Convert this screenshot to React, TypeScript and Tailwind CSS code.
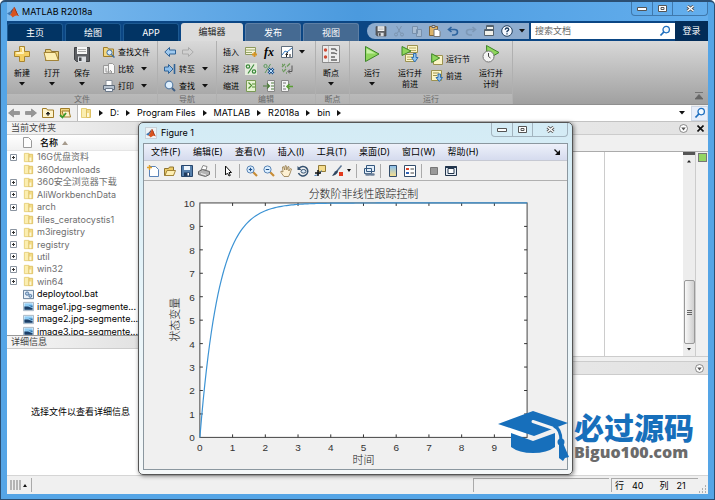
import React from "react";

type IconProps = { className?: string };

// Small coloured toolbar glyphs, drawn on a 12x12 grid unless noted
const Svg: React.FC<{
  children: React.ReactNode;
  size?: number;
  className?: string;
}> = ({ children, size = 12, className = "size-3" }) => (
  <svg
    viewBox={`0 0 ${size} ${size}`}
    className={`shrink-0 ${className}`}
    aria-hidden="true"
  >
    {children}
  </svg>
);

const MatlabLogo = ({ className }: IconProps) => (
  <Svg className={className}>
    <path d="M0 7.4 3.4 5.4 5 7.2 2.6 9.2z" fill="#3c78b4" />
    <path d="M3.4 5.4 7.2 1 5 7.2z" fill="#5f4a5c" />
    <path d="M7.2.8C8.4 2 9.4 6.4 12 10.2 9.6 8.8 8 9.4 5.6 11.4 4.8 9.8 4 9.2 2.6 9.2 5 8 6 3.6 7.2.8z" fill="#d9531e" />
    <path d="M7.2.8C8.4 2 9.4 6.4 12 10.2 9.4 8.4 8.6 5 7.2.8z" fill="#7e1f0f" />
  </Svg>
);

const PlusIcon = ({ className }: IconProps) => (
  <Svg size={18} className={className}>
    <path d="M6.5 1.5h5v5h5v5h-5v5h-5v-5h-5v-5h5z" fill="#f4cf63" stroke="#a9852f" />
    <path d="M7.5 2.5h2v5h-6v1h7v-6" fill="none" stroke="#fff3c0" />
  </Svg>
);

const OpenIcon = ({ className }: IconProps) => (
  <Svg size={18} className={className}>
    <path d="M2.5 15.500V4.500h5l1 2h7v9z" fill="#e9cf7d" stroke="#8f7430" />
    <path d="M3 15.500 1 7.500h11.500l3 8z" fill="#fdeeb2" stroke="#a38438" />
  </Svg>
);

const SaveIcon = ({ className }: IconProps) => (
  <Svg size={18} className={className}>
    <path d="M1.500 2.500h15v14h-13l-2-2z" fill="#5e6064" stroke="#3f4144" />
    <path d="M4 2h10v7H4z" fill="#f6f6f6" />
    <path d="M5 4.500h8M5 6.500h8" stroke="#aaa" />
    <path d="M5 11.500h8V17H5z" fill="#d9dce0" />
    <path d="M6 12.500h2.500V16H6z" fill="#44464a" />
  </Svg>
);

const FindFilesIcon = ({ className }: IconProps) => (
  <Svg className={className}>
    <path d="M.5 10.500V1.500h4l1 1.500h5v7.500z" fill="#f1d680" stroke="#a07c28" />
    <circle cx="6.500" cy="6.500" r="2.600" fill="#d7ecff" stroke="#3f6ea0" />
    <path d="m8.500 8.500 3 3" stroke="#3f6ea0" strokeWidth="1.500" />
  </Svg>
);

const CompareIcon = ({ className }: IconProps) => (
  <Svg className={className}>
    <path d="M.5 2.500h5v8h-5z" fill="#eee" stroke="#999" />
    <path d="M5.500.500h4l2 2v8h-6z" fill="#fafafa" stroke="#999" />
    <path d="M3 5v4h5M7 7l2 2-2 2" fill="none" stroke="#9a9a9a" />
  </Svg>
);

const PrintIcon = ({ className }: IconProps) => (
  <Svg className={className}>
    <path d="M3 .500h6v5H3z" fill="#fff" stroke="#8a929c" />
    <path d="M.500 5.500h11v4H.500z" fill="#b7c2cf" stroke="#5f6b79" />
    <path d="M2.500 8.500h7v3h-7z" fill="#f2f7ff" stroke="#6d7a8a" />
  </Svg>
);

const ArrowLeftIcon = ({ className }: IconProps) => (
  <Svg className={className}>
    <path d="M5.500 1.500v2.500h6v4h-6v2.500L.800 6z" fill="#9fc9ee" stroke="#2f6296" />
  </Svg>
);

const ArrowRightIcon = ({ className }: IconProps) => (
  <Svg className={className}>
    <path d="M6.500 1.500v2.500h-6v4h6v2.500L11.200 6z" fill="#d0d0d0" stroke="#aaa" />
  </Svg>
);

const GotoIcon = ({ className }: IconProps) => (
  <Svg className={className}>
    <path d="M4.500 1.500v2.500H.500v4h4v2.500L9 6z" fill="#8fc0ec" stroke="#2f6296" />
    <path d="M10.500 1v10" stroke="#2f6296" strokeWidth="1.600" />
  </Svg>
);

const SearchIcon = ({ className }: IconProps) => (
  <Svg className={className}>
    <circle cx="5" cy="5" r="3.800" fill="#dff0ff" stroke="#5c7fa6" strokeWidth="1.200" />
    <path d="m8 8 3 3" stroke="#3f5f86" strokeWidth="2" />
  </Svg>
);

const BlueSearchIcon = ({ className }: IconProps) => (
  <Svg className={className}>
    <circle cx="7.200" cy="4.600" r="3.200" fill="#f4faff" stroke="#1f6fbf" strokeWidth="1.300" />
    <path d="M4.800 7 1.500 10.500" stroke="#1f6fbf" strokeWidth="1.800" />
  </Svg>
);

const InsertIcon = ({ className }: IconProps) => (
  <Svg className={className}>
    <path d="M.500 1.500h10v7H.500z" fill="#f5f3d8" stroke="#8e9a5d" />
    <path d="M1 4h9M1 6.500h6" stroke="#96a86a" />
    <path d="M9.500 6v5M7 8.500h5" stroke="#d79422" strokeWidth="1.800" />
  </Svg>
);

const FiIcon = ({ className }: IconProps) => (
  <Svg className={className}>
    <path d="M.500.500h11v11H.500z" fill="#fff" stroke="#5f6d7c" />
    <path d="M1 9 4 5l2 1 5-4" fill="none" stroke="#3479bd" />
    <path d="M5.500 11V8q0-1.500 1.500-1.500M4.500 8.500H7M9 8v3" fill="none" stroke="#222" />
  </Svg>
);

const PercentIcon = ({ className }: IconProps) => (
  <Svg className={className}>
    <path d="M0 0h12v12H0z" fill="#e4eddc" />
    <circle cx="3" cy="3.500" r="1.700" fill="none" stroke="#3c8a3c" strokeWidth="1.200" />
    <circle cx="9" cy="8.500" r="1.700" fill="none" stroke="#3c8a3c" strokeWidth="1.200" />
    <path d="M9 1.500 3 10.500" stroke="#3c8a3c" strokeWidth="1.200" />
  </Svg>
);

const UncommentIcon = ({ className }: IconProps) => (
  <Svg className={className}>
    <circle cx="2.500" cy="3" r="1.600" fill="none" stroke="#5d9a5d" />
    <path d="M7.500 1 2 10" stroke="#5d9a5d" />
    <path d="m5.500 5.500 5 5m0-5-5 5" stroke="#1f548f" strokeWidth="2.600" />
    <path d="m5.500 5.500 5 5m0-5-5 5" stroke="#b9dcf7" strokeWidth="1" />
  </Svg>
);

const WrapIcon = ({ className }: IconProps) => (
  <Svg className={className}>
    <path d="m1 4 3-3M1 1.500h1M4 4h1M6 3.500l3-3M2 9l3-3M1 7h1M5 10h1" stroke="#6c9a5e" strokeWidth="1.300" />
    <path d="M11 2.500v6H7.500M9 6.500l-2 2 2 2" fill="none" stroke="#555" />
  </Svg>
);

const IndentIcon = ({ className }: IconProps) => (
  <Svg className={className}>
    <path d="M1.500.500h9v11h-9z" fill="#e6f3d2" stroke="#7a9a55" />
    <path d="m3.500 2.500 3 3-3 3M7 4h3M7 7h3" fill="none" stroke="#4e8e2f" strokeWidth="1.200" />
  </Svg>
);

const IndentMoreIcon = ({ className }: IconProps) => (
  <Svg className={className}>
    <path d="M4.500.500h7v11h-7z" fill="#f4f4f4" stroke="#888" />
    <path d="M0 6h6M4 3.500 6.500 6 4 8.500M8 3h3M8 6h3M8 9h3" fill="none" stroke="#4d7d3a" strokeWidth="1.200" />
  </Svg>
);

const IndentLessIcon = ({ className }: IconProps) => (
  <Svg className={className}>
    <path d="M.500.500h7v11h-7z" fill="#f4f4f4" stroke="#888" />
    <path d="M12 6.500H6M8.500 4 6 6.500 8.500 9" fill="none" stroke="#5a9e35" strokeWidth="1.600" />
    <path d="M2 3h3M2 6h2M2 9h3" stroke="#777" />
  </Svg>
);

const BreakpointIcon = ({ className }: IconProps) => (
  <Svg size={18} className={className}>
    <path d="M.500.500h17v17H.500z" fill="#ececec" stroke="#8a8a8a" />
    <path d="M6.500 1v16" stroke="#bbb" />
    <circle cx="3.500" cy="5" r="1.700" fill="#cf4a35" />
    <circle cx="3.500" cy="12" r="1.700" fill="#cf4a35" />
    <path d="M9 4h4l2 2M9 8h3l3 1M9 12h4M9 15h6" fill="none" stroke="#666" strokeWidth="1.300" />
  </Svg>
);

const RunIcon = ({ className }: IconProps) => (
  <Svg size={18} className={className}>
    <path d="M2.500 1.500 16 9 2.500 16.500z" fill="#8fd65c" stroke="#3c8527" />
    <path d="m3.500 3.500 9 5h-9z" fill="#c7f0a5" />
  </Svg>
);

const RunAdvanceIcon = ({ className }: IconProps) => (
  <Svg size={18} className={className}>
    <path d="M6.500.500h10v7h-10zM4.500 9.500h9v7h-9z" fill="#fbf5c6" stroke="#9c9250" />
    <path d="M8 3h7M8 5.500h7M6 12h6M6 14.500h6" stroke="#b6ab63" />
    <path d="m1 1.500 9 4.500-9 4.500z" fill="#8fd65c" stroke="#3c8527" />
    <path d="M12.500 8.500h2.500v4h2l-3.200 4.500-3.300-4.500h2z" fill="#8fc4f2" stroke="#2f6eae" />
  </Svg>
);

const RunSectionIcon = ({ className }: IconProps) => (
  <Svg className={className}>
    <path d="M2.500 2.500h9v9h-9z" fill="#fbf5c6" stroke="#9c9250" />
    <path d="m.700.700 8 4.300-8 4.500z" fill="#8fd65c" stroke="#3c8527" />
  </Svg>
);

const AdvanceIcon = ({ className }: IconProps) => (
  <Svg className={className}>
    <path d="M.500.500h10v10H.500z" fill="#fbf5c6" stroke="#9c9250" />
    <path d="M2 3h6M2 5.500h4" stroke="#9c9250" />
    <path d="M7 4h2.500v3.500h2L8.300 11.500 5 7.500h2z" fill="#8fc4f2" stroke="#2f6eae" />
  </Svg>
);

const RunTimeIcon = ({ className }: IconProps) => (
  <Svg size={18} className={className}>
    <path d="M4.500.500 17 7.500l-12 7z" fill="#8fd65c" stroke="#3c8527" />
    <circle cx="6.500" cy="11.500" r="5.500" fill="#f4f4f4" stroke="#777" />
    <path d="M6.500 8v3.500L8.500 13" fill="none" stroke="#444" />
  </Svg>
);

const CutIcon = ({ className }: IconProps) => (
  <Svg className={className}>
    <path d="m3.500 1 4 7M8.500 1l-4 7" stroke="#7b93ae" />
    <circle cx="3" cy="9.500" r="1.500" fill="none" stroke="#7b93ae" />
    <circle cx="9" cy="9.500" r="1.500" fill="none" stroke="#7b93ae" />
  </Svg>
);

const CopyIcon = ({ className }: IconProps) => (
  <Svg className={className}>
    <path d="M1.500 1.500h5v7h-5zM5.500 4.500h5v7h-5z" fill="#a9bdd3" stroke="#7890ab" />
  </Svg>
);

const PasteIcon = ({ className }: IconProps) => (
  <Svg className={className}>
    <path d="M.500 1.500h8v9h-8z" fill="#dcb368" stroke="#806437" />
    <path d="M3 .500h3v2H3z" fill="#ddd" stroke="#666" />
    <path d="M5 4.500h4l2 2v5H5z" fill="#fff" stroke="#777" />
  </Svg>
);

const UndoIcon = ({ className }: IconProps) => (
  <Svg className={className}>
    <path d="M4.500 2 1.500 4.500l3 2.500M2 4.500h5.500q3 0 3 2.500t-3 3H5" fill="none" stroke="#2e649f" strokeWidth="1.600" />
  </Svg>
);

const RedoIcon = ({ className }: IconProps) => (
  <Svg className={className}>
    <path d="m7.500 2 3 2.500-3 2.500M10 4.500H4.500q-3 0-3 2.500t3 3H7" fill="none" stroke="#7d98b6" strokeWidth="1.600" />
  </Svg>
);

const WindowsIcon = ({ className }: IconProps) => (
  <Svg className={className}>
    <path d="M3.500.500h7v5h-7zM1.500 4.500h9v6h-9z" fill="#f1f1ea" stroke="#55636f" />
    <path d="M1.500 5.500h9M3.500 1.500h7" stroke="#55636f" />
  </Svg>
);

const HelpIcon = ({ className }: IconProps) => (
  <Svg className={className}>
    <circle cx="6" cy="6" r="5.300" fill="#f5f9ff" stroke="#23405f" />
    <path d="M4.300 4.800q0-1.800 1.700-1.800t1.700 1.600Q7.700 5.600 6 6.400V7.200M6 8.300v1.300" fill="none" stroke="#1b3a5c" strokeWidth="1.300" />
  </Svg>
);

const FolderIcon = ({ className }: IconProps) => (
  <Svg className={className}>
    <path d="M1.500 1.500h5v9h-5z" fill="#fbeeb0" stroke="#e6cf79" />
    <path d="M6.500 2.500h4v8h-4z" fill="#f3dc88" stroke="#ddc062" />
    <path d="M7 6h2v4H7z" fill="#fdf7d9" />
  </Svg>
);

const BatIcon = ({ className }: IconProps) => (
  <Svg className={className}>
    <path d="M.500 1.500h11v9H.500z" fill="#e9f1f9" stroke="#5b7592" />
    <circle cx="4.500" cy="5" r="1.800" fill="#b5cfe9" stroke="#4a719b" />
    <circle cx="8" cy="7.500" r="1.600" fill="#b5cfe9" stroke="#4a719b" />
  </Svg>
);

const ImageIcon = ({ className }: IconProps) => (
  <Svg className={className}>
    <path d="M.500 1.500h11v9H.500z" fill="#fff" stroke="#9fb0bf" />
    <path d="M1.500 2.500h9v7h-9z" fill="#8fcdf5" />
    <path d="M1.500 6h4l5 2v1.500h-9z" fill="#1c3e66" />
    <path d="M6 5h4.500v2z" fill="#2f6ea8" />
  </Svg>
);

const Caret = () => (
  <svg viewBox="0 0 6 4" className="h-1 w-1.5 shrink-0" aria-hidden="true">
    <path d="M0 0h6L3 3.500z" fill="#111" />
  </svg>
);

const CrumbArrow = () => (
  <svg viewBox="0 0 4 6" className="h-1.5 w-1 shrink-0" aria-hidden="true">
    <path d="M0 0v6l4-3z" fill="#111" />
  </svg>
);

const RoundCaret = () => (
  <Svg className="size-[9px]">
    <circle cx="6" cy="6" r="5.300" fill="#fff" stroke="#666" />
    <path d="M3 4.500h6L6 8.500z" fill="#555" />
  </Svg>
);

// Ribbon pieces

const BigButton: React.FC<{
  icon: React.ReactNode;
  lines: string[];
  menu?: boolean;
}> = ({ icon, lines, menu }) => (
  <button type="button" className="flex w-[30px] flex-col items-center pt-1">
    {icon}
    <span className="mt-[5px] flex flex-col items-center whitespace-nowrap leading-[11px]">
      {lines.map((line) => (
        <span key={line}>{line}</span>
      ))}
    </span>
    {menu && (
      <span className="mt-[3px]">
        <Caret />
      </span>
    )}
  </button>
);

const RowButton: React.FC<{
  icon: React.ReactNode;
  label: string;
  menu?: boolean;
}> = ({ icon, label, menu }) => (
  <button type="button" className="flex h-[17px] items-center gap-[3px] whitespace-nowrap">
    {icon}
    <span>{label}</span>
    {menu && (
      <span className="pl-1">
        <Caret />
      </span>
    )}
  </button>
);

const IconButton: React.FC<{ label: string; children: React.ReactNode }> = ({
  label,
  children,
}) => (
  <button type="button" aria-label={label} className="flex shrink-0 items-center justify-center">
    {children}
  </button>
);

const Group: React.FC<{
  title: string;
  className: string;
  children: React.ReactNode;
}> = ({ title, className, children }) => (
  <section className={`flex shrink-0 flex-col border-r border-[#b0b0b0] ${className}`}>
    <div className="flex h-[53px] items-start">{children}</div>
    <h2 className="bg-white/20 text-center leading-[10px] text-[#6a6a6a]">
      {title}
    </h2>
  </section>
);

const tabs = [
  { name: "主页", kind: "main" },
  { name: "绘图", kind: "main" },
  { name: "APP", kind: "main" },
  { name: "编辑器", kind: "active" },
  { name: "发布", kind: "context" },
  { name: "视图", kind: "context" },
];

const tabStyles: Record<string, string> = {
  main: "w-14 bg-[#023464] text-white border border-b-0 border-[#1d5a92]",
  active: "w-[62px] bg-[#dcdcdc] text-[#222]",
  context: "w-14 bg-[#456a92] text-white border border-b-0 border-[#5d7fa5]",
};

const quickTools = [
  { name: "保存", icon: <SaveIcon className="size-3" /> },
  { name: "剪切", icon: <CutIcon /> },
  { name: "复制", icon: <CopyIcon /> },
  { name: "粘贴", icon: <PasteIcon /> },
  { name: "撤消", icon: <UndoIcon /> },
  { name: "重做", icon: <RedoIcon /> },
  { name: "切换窗口", icon: <WindowsIcon /> },
  { name: "帮助", icon: <HelpIcon /> },
];

const TabStrip = () => (
  <div className="flex h-5 items-stretch bg-[#0b4684] text-[9px]">
    <div role="tablist" className="flex shrink-0 gap-[2px] pt-[2px]">
      {tabs.map((tab) => (
        <button
          key={tab.name}
          type="button"
          role="tab"
          aria-selected={tab.kind === "active"}
          className={`rounded-t-[3px] leading-4 ${tabStyles[tab.kind]}`}
        >
          {tab.name}
        </button>
      ))}
    </div>
    <div className="ml-2 flex flex-1 items-center justify-between self-center rounded-l-full bg-[#8eacce] py-[2px] pr-1 pl-2">
      {quickTools.map((tool) => (
        <IconButton key={tool.name} label={tool.name}>
          {tool.icon}
        </IconButton>
      ))}
      <IconButton label="更多">
        <Caret />
      </IconButton>
    </div>
    <label className="my-[2px] ml-[2px] flex w-36 items-center bg-white px-1">
      <input
        type="search"
        aria-label="搜索文档"
        placeholder="搜索文档"
        className="min-w-0 flex-1 bg-transparent outline-none placeholder:text-[#666]"
      />
      <BlueSearchIcon />
    </label>
    <button type="button" className="w-[33px] bg-[#022c58] text-white">
      登录
    </button>
  </div>
);

const editRows = [
  {
    label: "插入",
    icons: [
      <InsertIcon key="a" />,
      <span key="b" className="w-3 font-['Liberation_Serif',serif] text-[12px] leading-3 font-bold italic">
        fx
      </span>,
      <FiIcon key="c" />,
    ],
    menu: true,
  },
  {
    label: "注释",
    icons: [<PercentIcon key="a" />, <UncommentIcon key="b" />, <WrapIcon key="c" />],
  },
  {
    label: "缩进",
    icons: [<IndentIcon key="a" />, <IndentMoreIcon key="b" />, <IndentLessIcon key="c" />],
  },
];

const Ribbon = () => (
  <div className="relative flex h-16 border-b border-[#8f8f8f] bg-linear-to-b from-[#d9d9d9] to-[#a0a0a0] text-[8px] text-black">
    <Group title="文件" className="w-[151px]">
      <BigButton icon={<PlusIcon className="size-[18px]" />} lines={["新建"]} menu />
      <BigButton icon={<OpenIcon className="size-[18px]" />} lines={["打开"]} menu />
      <BigButton icon={<SaveIcon className="size-[18px]" />} lines={["保存"]} menu />
      <div className="flex flex-col pt-[2px] pl-1.5">
        <RowButton icon={<FindFilesIcon />} label="查找文件" />
        <RowButton icon={<CompareIcon />} label="比较" menu />
        <RowButton icon={<PrintIcon />} label="打印" menu />
      </div>
    </Group>
    <Group title="导航" className="w-[59px]">
      <div className="flex flex-col pt-[2px] pl-1.5">
        <div className="flex h-[17px] items-center gap-1.5">
          <IconButton label="后退">
            <ArrowLeftIcon />
          </IconButton>
          <IconButton label="前进">
            <ArrowRightIcon />
          </IconButton>
        </div>
        <RowButton icon={<GotoIcon />} label="转至" menu />
        <RowButton icon={<SearchIcon />} label="查找" menu />
      </div>
    </Group>
    <Group title="编辑" className="w-[99px]">
      <div className="flex flex-col pt-[2px] pl-1.5">
        {editRows.map((row) => (
          <div key={row.label} className="flex h-[17px] items-center gap-1.5">
            <span className="w-4">{row.label}</span>
            {row.icons.map((icon, i) => (
              <IconButton key={i} label={`${row.label} ${i + 1}`}>
                {icon}
              </IconButton>
            ))}
            {row.menu && <Caret />}
          </div>
        ))}
      </div>
    </Group>
    <Group title="断点" className="w-[34px]">
      <BigButton icon={<BreakpointIcon className="size-[18px]" />} lines={["断点"]} menu />
    </Group>
    <Group title="运行" className="w-[163px]">
      <div className="flex gap-2 pl-[7px]">
        <BigButton icon={<RunIcon className="size-[18px]" />} lines={["运行"]} menu />
        <BigButton
          icon={<RunAdvanceIcon className="size-[18px]" />}
          lines={["运行并", "前进"]}
        />
      </div>
      <div className="flex flex-col pt-[9px] pl-1.5">
        <RowButton icon={<RunSectionIcon />} label="运行节" />
        <RowButton icon={<AdvanceIcon />} label="前进" />
      </div>
      <div className="pl-1.5">
        <BigButton
          icon={<RunTimeIcon className="size-[18px]" />}
          lines={["运行并", "计时"]}
        />
      </div>
    </Group>
    <div className="flex flex-1 items-end justify-end pr-[5px] pb-1">
      <IconButton label="最小化工具条">
        <svg viewBox="0 0 8 8" className="size-2">
          <path d="M0 .500h8M4 2.500 8 7H0z" fill="#666" stroke="#666" strokeWidth=".8" />
        </svg>
      </IconButton>
    </div>
  </div>
);

const crumbs = ["D:", "Program Files", "MATLAB", "R2018a", "bin"];

const NavArrow: React.FC<{ flip?: boolean }> = ({ flip }) => (
  <svg viewBox="0 0 12 10" className={`h-2.5 w-3 ${flip ? "rotate-180" : ""}`}>
    <path d="M5.500 1v2.500h6v3h-6V9L.500 5z" fill="#969696" stroke="#7c7c7c" strokeWidth=".6" />
  </svg>
);

const AddressBar = () => (
  <div className="flex h-[17px] items-center border-b border-[#c2c2c2] bg-[#f0f0f0] text-[9px] text-black">
    <div className="flex items-center gap-[5px] px-px">
      <IconButton label="后退">
        <NavArrow />
      </IconButton>
      <IconButton label="前进">
        <NavArrow flip />
      </IconButton>
      <IconButton label="向上一级">
        <Svg>
          <path d="M.500 10.500V1.500h4l1 1.500h6v7.500z" fill="#fdf3cb" stroke="#a07c28" />
          <path d="M6 9V6M4.300 7 6 5l1.700 2z" fill="#222" stroke="#222" />
        </Svg>
      </IconButton>
      <IconButton label="浏览文件夹">
        <Svg>
          <path d="M1.500 9.500v-8h9v8z" fill="#f1d680" stroke="#a07c28" />
          <path d="M3 4h7l1.500 6H5z" fill="#fdf3cb" stroke="#a07c28" />
          <path d="m1 8 2.500 2.500L7 6" fill="none" stroke="#3d9a2c" strokeWidth="1.800" />
        </Svg>
      </IconButton>
    </div>
    <nav className="ml-[5px] flex h-full flex-1 items-center gap-[7px] border-l border-[#bbb] bg-white px-[2px]">
      <FolderIcon />
      {crumbs.map((crumb) => (
        <React.Fragment key={crumb}>
          <CrumbArrow />
          <a href="#" className="whitespace-nowrap">
            {crumb}
          </a>
        </React.Fragment>
      ))}
      <CrumbArrow />
      <span className="ml-auto pr-1">
        <Caret />
      </span>
    </nav>
    <button
      type="button"
      aria-label="搜索文件夹"
      className="flex h-[15px] w-[17px] items-center justify-center border border-[#cfd8e6] bg-[#e8eefa]"
    >
      <BlueSearchIcon />
    </button>
  </div>
);

// File browser

const files = [
  { name: "16G优盘资料", kind: "folder", expandable: true },
  { name: "360downloads", kind: "folder" },
  { name: "360安全浏览器下载", kind: "folder", expandable: true },
  { name: "AliWorkbenchData", kind: "folder", expandable: true },
  { name: "arch", kind: "folder", expandable: true },
  { name: "files_ceratocystis1", kind: "folder" },
  { name: "m3iregistry", kind: "folder", expandable: true },
  { name: "registry", kind: "folder", expandable: true },
  { name: "util", kind: "folder", expandable: true },
  { name: "win32", kind: "folder", expandable: true },
  { name: "win64", kind: "folder", expandable: true },
  { name: "deploytool.bat", kind: "bat" },
  { name: "image1.jpg-segmente...", kind: "image" },
  { name: "image2.jpg-segmente...", kind: "image" },
  { name: "image3.jpg-segmente...", kind: "image" },
];

const fileIcons: Record<string, React.ReactNode> = {
  folder: <FolderIcon className="size-[11px]" />,
  bat: <BatIcon className="size-[11px]" />,
  image: <ImageIcon className="size-[11px]" />,
};

const PanelHeader: React.FC<{ title?: string; children?: React.ReactNode }> = ({
  title,
  children,
}) => (
  <div className="flex h-[13px] shrink-0 items-center gap-1.5 border-b border-[#ccc] bg-linear-to-r from-[#f5f5f5] to-[#e2e2e2] px-1 text-[9px] leading-3 text-[#444]">
    <h2>{title}</h2>
    <span className="ml-auto flex items-center gap-[9px]">{children}</span>
  </div>
);

const FileBrowser = () => (
  <aside className="flex w-[132px] shrink-0 flex-col bg-white">
    <PanelHeader title="当前文件夹" />
    <div className="flex h-4 shrink-0 items-center gap-2 border-b border-[#e5e5e5] bg-linear-to-b from-white to-[#f1f1f1] pl-4 text-[9px] font-medium text-black">
      <svg viewBox="0 0 9 11" className="h-[11px] w-[9px]">
        <path d="M.500.500h5l3 3v7h-8z" fill="#fdfdfd" stroke="#999" />
      </svg>
      <span className="flex items-center gap-1">
        名称
        <svg viewBox="0 0 6 4" className="h-1 w-1.5">
          <path d="M0 4h6L3 0z" fill="#a59a8c" />
        </svg>
      </span>
    </div>
    <div className="h-[184px] shrink-0 overflow-hidden">
      <ul className="flex h-[187px] flex-col text-[9px]">
        {files.map((file) => (
          <li key={file.name} className="flex flex-1 items-center">
            <span className="flex w-4 shrink-0 pl-[3px]">
              {file.expandable && (
                <svg viewBox="0 0 7 7" className="size-[7px]">
                  <path d="M.500.500h6v6h-6z" fill="#fff" stroke="#8a94a0" />
                  <path d="M2 3.500h3M3.500 2v3" stroke="#333" />
                </svg>
              )}
            </span>
            {fileIcons[file.kind]}
            <span
              className={`pl-[3px] leading-3 whitespace-nowrap ${
                file.kind === "folder" ? "text-[#6e6e6e]" : "text-black"
              }`}
            >
              {file.name}
            </span>
          </li>
        ))}
      </ul>
    </div>
    <div className="border-t border-[#999]">
      <PanelHeader title="详细信息" />
    </div>
    <p className="flex flex-1 items-center justify-end pr-[9px] text-[9px] text-black">
      选择文件以查看详细信息
    </p>
  </aside>
);

const EditorPane = () => (
  <main className="flex flex-1 flex-col bg-[#f0f0f0]">
    <PanelHeader>
      <RoundCaret />
      <svg viewBox="0 0 7 7" className="size-[7px]">
        <path d="m.500.500 6 6m0-6-6 6" stroke="#111" strokeWidth="1.600" />
      </svg>
    </PanelHeader>
    <div className="h-[17px] shrink-0 border-b border-[#ababab]" />
    <div className="flex h-[205px] shrink-0 border-b border-[#ccc]">
      <div className="flex-1 bg-white" />
      <div className="w-[79px] border-l border-[#ccc] bg-white" />
      <div className="flex w-3 flex-col items-center bg-[#ededed]">
        <div className="h-[3px] w-full bg-[#555]" />
        <svg viewBox="0 0 6 4" className="mt-1 h-1 w-1.5">
          <path d="M1 3.500h4L3 1z" fill="#222" />
        </svg>
        <div className="mt-auto flex h-16 w-[11px] flex-col items-center justify-center gap-px rounded-[2px] border border-[#999] bg-linear-to-r from-[#f8f8f8] to-[#cfcfcf]">
          <span className="h-px w-[5px] bg-[#666]" />
          <span className="h-px w-[5px] bg-[#666]" />
          <span className="h-px w-[5px] bg-[#666]" />
        </div>
        <svg viewBox="0 0 6 4" className="my-1 h-1 w-1.5">
          <path d="M1 0h4L3 2.500z" fill="#222" />
        </svg>
      </div>
      <div className="w-[13px] border-l border-[#ccc] pt-px pl-[2px]">
        <div className="size-[9px] border border-[#777] bg-[#94d563]" />
      </div>
    </div>
    <div className="mt-1 border-t border-[#ccc]">
      <PanelHeader>
        <RoundCaret />
      </PanelHeader>
    </div>
    <div className="flex-1 bg-white" />
  </main>
);

const StatusBar = () => (
  <footer className="flex h-[19px] items-center border-t border-[#d5d5d5] bg-[#f0f0f0] text-[9px] text-black">
    <div className="flex h-3.5 items-center gap-px border-r border-[#aaa] pr-1 pl-[3px]">
      <span className="h-2.5 w-[2px] bg-[#b5b5b5]" />
      <span className="h-2.5 w-[2px] bg-[#b5b5b5]" />
      <span className="h-2.5 w-[2px] bg-[#b5b5b5]" />
      <span className="h-2.5 w-[2px] bg-[#b5b5b5]" />
      <svg viewBox="0 0 4 3" className="ml-px h-[3px] w-1">
        <path d="M0 3h4L2 0z" fill="#111" />
      </svg>
    </div>
    <div className="ml-auto h-3.5 w-[136px] border-t border-l border-[#aaa]" />
    <div className="ml-[2px] flex h-3.5 w-[87px] items-center gap-2 border-t border-l border-[#aaa] pl-[3px]">
      <span>行</span>
      <span>40</span>
      <span className="ml-2">列</span>
      <span>21</span>
    </div>
    <svg viewBox="0 0 9 9" className="mr-px size-[9px] self-end">
      <path d="M7 1h1M7 4h1M4 4h1M7 7h1M4 7h1M1 7h1" stroke="#999" strokeWidth="1.500" />
    </svg>
  </footer>
);

// Window caption buttons, shared by the desktop and the figure window

const CaptionButtons: React.FC<{ className: string }> = ({ className }) => (
  <div className={`flex h-3.5 w-[77px] shrink-0 self-start overflow-hidden rounded-b-[4px] border border-t-0 ${className}`}>
    <button type="button" aria-label="最小化" className="flex w-[21px] items-center justify-center border-r border-inherit">
      <svg viewBox="0 0 10 4" className="h-1 w-2.5">
        <path d="M.500.500h9v3h-9z" fill="#fff" stroke="#555" />
      </svg>
    </button>
    <button type="button" aria-label="最大化" className="flex w-5 items-center justify-center border-r border-inherit">
      <svg viewBox="0 0 9 7" className="h-[7px] w-[9px]">
        <path d="M.500.500h8v6h-8z" fill="#fff" stroke="#555" />
        <path d="M3 2.500h3v2H3z" fill="none" stroke="#555" />
      </svg>
    </button>
    <button type="button" aria-label="关闭" className="flex flex-1 items-center justify-center">
      <svg viewBox="0 0 9 7" className="h-[7px] w-[9px]">
        <path d="m1.500 1 6 5m0-5-6 5" stroke="#555" strokeWidth="3" />
        <path d="m1.500 1 6 5m0-5-6 5" stroke="#fff" strokeWidth="1.400" />
      </svg>
    </button>
  </div>
);

// Figure window

const LEFT = 56;
const TOP = 22;
const WIDTH = 328;
const HEIGHT = 235;

const toX = (t: number) => LEFT + (t / 10) * WIDTH;
const toY = (v: number) => TOP + HEIGHT - (v / 10) * HEIGHT;

const response = Array.from({ length: 201 }, (_, i) => {
  const t = i / 20;
  return `${toX(t).toFixed(2)},${toY(10 * (1 - Math.exp(-1.7 * t))).toFixed(2)}`;
}).join(" ");

const Plot = () => (
  <svg viewBox="0 0 424 289" className="block w-full bg-[#f0f0f0]">
    <rect x={LEFT} y={TOP} width={WIDTH} height={HEIGHT} fill="#fff" stroke="#444" />
    <g stroke="#333">
      {[1, 2, 3, 4, 5, 6, 7, 8, 9].map((n) => (
        <path
          key={n}
          d={`M${toX(n)} ${TOP}v3M${toX(n)} ${TOP + HEIGHT}v-3M${LEFT} ${toY(n)}h3M${LEFT + WIDTH} ${toY(n)}h-3`}
        />
      ))}
    </g>
    <polyline points={response} fill="none" stroke="#3c93d4" strokeWidth="1.2" />
    <g className="font-['Liberation_Sans',Arial,sans-serif] text-[10px]" fill="#333">
      {[0, 1, 2, 3, 4, 5, 6, 7, 8, 9].map((n) => (
        <text key={n} x={toX(n)} y="271" textAnchor="middle">
          {n}
        </text>
      ))}
      {[0, 1, 2, 3, 4, 5, 6, 7, 8, 9, 10].map((n) => (
        <text key={n} x="51" y={toY(n) + 4} textAnchor="end">
          {n}
        </text>
      ))}
    </g>
    <g fill="#111" className="text-[11px] font-light">
      <text x="220" y="17" textAnchor="middle">
        分数阶非线性跟踪控制
      </text>
      <text x="220" y="284" textAnchor="middle">
        时间
      </text>
      <text transform="translate(35 139) rotate(-90)" textAnchor="middle">
        状态变量
      </text>
    </g>
  </svg>
);

const menus = ["文件(F)", "编辑(E)", "查看(V)", "插入(I)", "工具(T)", "桌面(D)", "窗口(W)", "帮助(H)"];

const Divider = () => <span className="mr-px h-3.5 w-px shrink-0 bg-[#aaa]" />;

const FigureToolbar = () => (
  <div className="flex h-5 items-center gap-[5px] border-b border-[#b0b0b0] bg-[#f0f0f0] px-[3px]">
    <IconButton label="新建图窗">
      <Svg>
        <path d="M2.500 1.500h6l3 3v7h-9z" fill="#fff" stroke="#5a83b8" />
        <path d="M2.500 0v5M0 2.500h5" stroke="#dfa02c" strokeWidth="1.400" />
      </Svg>
    </IconButton>
    <IconButton label="打开文件">
      <Svg>
        <path d="M.500 10.500v-7h4l1-1.500h4v8.500z" fill="#eccb67" stroke="#8f7430" />
        <path d="M1 10.500 3 5.500h8.500l-2 5z" fill="#fdeeb2" stroke="#a38438" />
      </Svg>
    </IconButton>
    <IconButton label="保存图窗">
      <Svg>
        <path d="M.500.500h11v11H.500z" fill="#5781ad" stroke="#27466c" />
        <path d="M3 1h6v4H3z" fill="#eef5fc" />
        <path d="M3 7.500h6V11H3z" fill="#203b5e" />
        <path d="M6.500 8H8v2.500H6.500z" fill="#fff" />
      </Svg>
    </IconButton>
    <IconButton label="打印图窗">
      <Svg>
        <path d="m3 5 2-4.500 4 1L8 5z" fill="#fff" stroke="#888" />
        <path d="m.500 6.500 4-2 7 2v3l-4 2-7-2z" fill="#b4b4b4" stroke="#666" />
        <path d="m3 8.500 5 1.500" stroke="#eee" />
      </Svg>
    </IconButton>
    <Divider />
    <IconButton label="编辑绘图">
      <Svg>
        <path d="M3.500 1v9l2-2 1.500 3 1.300-.600L7 7.500h2.500z" fill="#fff" stroke="#111" />
      </Svg>
    </IconButton>
    <Divider />
    <IconButton label="放大">
      <Svg>
        <path d="m7 7 4 4" stroke="#c88c35" strokeWidth="2.200" />
        <circle cx="4.500" cy="4.500" r="3.600" fill="#dcefff" stroke="#5883b4" />
        <path d="M2.800 4.500h3.400M4.500 2.800v3.400" stroke="#1d4f8a" strokeWidth="1.200" />
      </Svg>
    </IconButton>
    <IconButton label="缩小">
      <Svg>
        <path d="m7 7 4 4" stroke="#c88c35" strokeWidth="2.200" />
        <circle cx="4.500" cy="4.500" r="3.600" fill="#dcefff" stroke="#5883b4" />
        <path d="M2.800 4.500h3.400" stroke="#1d4f8a" strokeWidth="1.200" />
      </Svg>
    </IconButton>
    <IconButton label="平移">
      <Svg>
        <path
          d="M4 11.500 1 7.500 1 6l2 1L2.500 2l1-.500L4.800 5 5 .800 6.200.800 6.800 5 8 1.500l1 .300L8.800 6l1.700-2.500 1 .500-1.700 5L8.500 11.500z"
          fill="#fdf0d2"
          stroke="#927747"
          strokeWidth=".8"
        />
      </Svg>
    </IconButton>
    <IconButton label="三维旋转">
      <Svg>
        <path d="M2 3.500A4.800 4.800 0 1 1 1.500 8" fill="none" stroke="#34516f" strokeWidth="1.500" />
        <path d="M.500 1v4h4z" fill="#34516f" />
        <ellipse cx="6.500" cy="6.300" rx="2.500" ry="1.800" fill="#dceaf7" stroke="#34516f" />
      </Svg>
    </IconButton>
    <IconButton label="数据游标">
      <Svg>
        <path d="M4.500.500h7v6h-7z" fill="#f5dc8c" stroke="#937b38" />
        <path d="M.500 10.500q5 0 7-5" fill="none" stroke="#3f79b8" />
        <path d="M4 5v6M1 8h6" stroke="#111" strokeWidth="1.500" />
      </Svg>
    </IconButton>
    <IconButton label="刷亮">
      <span className="flex items-center gap-1">
        <Svg>
          <path d="M10.500.500 6 6" stroke="#5b7594" strokeWidth="1.500" />
          <path d="M6.500 5 4 6.500 1 11q4-.500 6-4z" fill="#2f4660" />
          <path d="M8 7h4v4H8z" fill="#e23a1d" />
        </Svg>
        <svg viewBox="0 0 4 3" className="h-[3px] w-1">
          <path d="M0 0h4L2 3z" fill="#111" />
        </svg>
      </span>
    </IconButton>
    <Divider />
    <IconButton label="链接绘图">
      <Svg>
        <path d="M3.500.500h8v6h-8zM1.500 3.500h7v5h-7z" fill="#e2eefa" stroke="#35587e" />
        <path d="M3.500 9.500h2.500M8 9.500h2.500" stroke="#6c8099" strokeWidth="2.500" strokeLinecap="round" />
      </Svg>
    </IconButton>
    <Divider />
    <IconButton label="颜色栏">
      <Svg>
        <defs>
          <linearGradient id="bar" x1="0" x2="0" y1="0" y2="1">
            <stop offset="0" stopColor="#83bdf2" />
            <stop offset="1" stopColor="#fbe08a" />
          </linearGradient>
        </defs>
        <path d="M2.500.500h7v11h-7z" fill="url(#bar)" stroke="#334d6b" />
      </Svg>
    </IconButton>
    <IconButton label="图例">
      <Svg>
        <path d="M.500.500h11v11H.500z" fill="#fff" stroke="#334d6b" />
        <path d="M2 3h3v2H2z" fill="#d9432a" />
        <path d="M2 7h3v2H2z" fill="#2f62b5" />
        <path d="M6.500 4H10M6.500 8H10" stroke="#444" />
      </Svg>
    </IconButton>
    <Divider />
    <IconButton label="隐藏绘图工具">
      <Svg>
        <path d="M2.500 2.500h7v7h-7z" fill="#999" stroke="#777" />
      </Svg>
    </IconButton>
    <IconButton label="显示绘图工具">
      <Svg>
        <path d="M.500 1.500h11v9H.500z" fill="#e8eef5" stroke="#23364d" />
        <path d="M.500 2h11" stroke="#23364d" strokeWidth="2" />
        <path d="M3 3.500h6v5H3z" fill="#fff" stroke="#23364d" />
      </Svg>
    </IconButton>
  </div>
);

const FigureWindow = () => (
  <section className="absolute top-[120px] left-[137px] w-[435px] rounded-[5px] border border-[#555] bg-linear-to-b from-[#d3ebf5] via-[#e8f5fa] to-[#f5f8f9] px-1 pb-1 shadow-[1px_1px_4px_rgba(0,0,0,0.5)]">
    <header className="flex h-5 items-center gap-1 pl-[2px]">
      <span className="flex size-3 items-center justify-center border border-[#c8d2da] bg-[#eef3f6]">
        <MatlabLogo className="size-2.5" />
      </span>
      <h1 className="flex-1 text-[9px] text-black">Figure 1</h1>
      <CaptionButtons className="border-[#a3b4bf]" />
    </header>
    <div className="border border-[#8b979f]">
      <nav className="flex h-[17px] items-center gap-3 border-b border-[#c6c9d3] bg-linear-to-b from-[#eef1fa] to-[#d5dbee] px-[7px] text-[9px] text-black">
        {menus.map((menu) => (
          <button key={menu} type="button" className="whitespace-nowrap">
            {menu}
          </button>
        ))}
        <svg viewBox="0 0 6 6" className="ml-auto size-1.5">
          <path d="m.500.500 4 4" stroke="#111" strokeWidth="1.200" />
          <path d="M6 1v5H1z" fill="#111" />
        </svg>
      </nav>
      <FigureToolbar />
      <Plot />
    </div>
  </section>
);

const Watermark = () => (
  <div className="absolute right-5 bottom-9 flex items-center gap-1">
    <svg viewBox="0 0 72 52" className="h-[52px] w-[72px]" fill="#176fbb" aria-hidden="true">
      <path d="M0 13 35 0l35 12-34 13z" />
      <path d="M13 22l22 8 22-8v14q-8 6-22 6t-22-6z" />
      <path d="M35 10.500 54 17q5 2 5 6" fill="none" stroke="#f4f4f4" strokeWidth="3" strokeLinecap="round" />
      <path d="M56 15q7 3 7 15" fill="none" stroke="#176fbb" strokeWidth="3" />
      <circle cx="63" cy="31" r="3.500" />
      <path d="M61 32h4l6 14-4 1-2 3-4-3z" />
    </svg>
    <div className="flex flex-col">
      <span className="text-[30px] leading-[30px] font-black text-[#176fbb]">
        必过源码
      </span>
      <span className="font-['Open_Sans',sans-serif] text-[16px] leading-[18px] font-extrabold text-[#6b6b6b]">
        Biguo100.com
      </span>
    </div>
  </div>
);

const App: React.FC = () => (
  <div className="relative flex min-h-screen flex-col overflow-hidden rounded-t-[5px] border border-t-2 border-[#2b4f73] bg-[#55a5e6] px-1.5 pb-[5px] font-[Inter,'Noto_Sans_CJK_SC',sans-serif]">
    <header className="flex h-[19px] items-center gap-[3px] bg-linear-to-r from-[#7ebcf0] via-[#4b9ade] to-[#63aeed]">
      <MatlabLogo className="size-3" />
      <h1 className="flex-1 text-[9px] text-black">MATLAB R2018a</h1>
      <CaptionButtons className="border-[#3f78ac]" />
    </header>
    <TabStrip />
    <Ribbon />
    <AddressBar />
    <div className="flex flex-1">
      <FileBrowser />
      <EditorPane />
    </div>
    <StatusBar />
    <FigureWindow />
    <Watermark />
  </div>
);

export default App;
